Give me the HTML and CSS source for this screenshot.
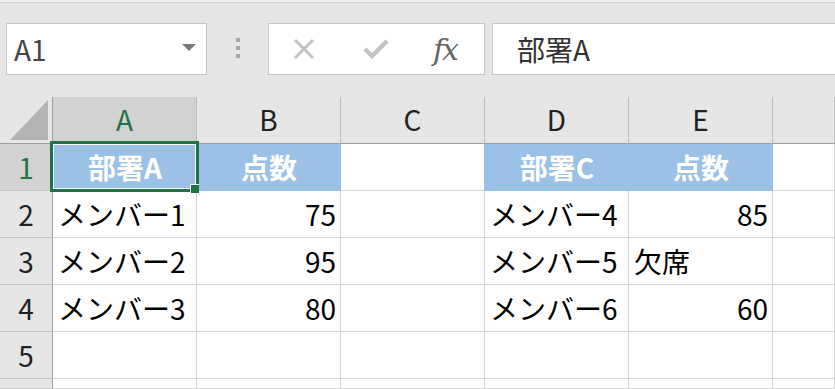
FILE: index.html
```html
<!DOCTYPE html>
<html lang="ja">
<head>
    <meta charset="UTF-8">
    <meta name="viewport" content="width=device-width, initial-scale=1.0">
    <title>Book1 - Excel</title>
    <link rel="stylesheet" href="styles.css">
</head>
<body>
    <div class="topline"></div>

    <div class="formula-bar">
        <div class="name-box">
            <span class="name-text">A1</span>
            <span class="dropdown"></span>
        </div>
        <div class="grip">
            <span></span><span></span><span></span>
        </div>
        <div class="fx-buttons">
            <svg class="icon cancel" width="24" height="24" viewBox="0 0 24 24">
                <path d="M3 3 L21 21 M21 3 L3 21" stroke="#c3c3c3" stroke-width="3" fill="none"/>
            </svg>
            <svg class="icon enter" width="26" height="24" viewBox="0 0 26 24">
                <path d="M2 12 L9 19 L24 4" stroke="#c3c3c3" stroke-width="4.5" fill="none"/>
            </svg>
            <span class="fx">fx</span>
        </div>
        <div class="formula-input">部署A</div>
    </div>

    <div class="sheet">
        <div class="corner"><span class="tri"></span></div>
        <div class="colhead selected">A</div>
        <div class="colhead">B</div>
        <div class="colhead">C</div>
        <div class="colhead">D</div>
        <div class="colhead">E</div>
        <div class="colhead"></div>

        <div class="rowhead selected">1</div>
        <div class="cell fill">部署A</div>
        <div class="cell fill">点数</div>
        <div class="cell edge"></div>
        <div class="cell fill">部署C</div>
        <div class="cell fill">点数</div>
        <div class="cell"></div>

        <div class="rowhead">2</div>
        <div class="cell">メンバー1</div>
        <div class="cell num">75</div>
        <div class="cell"></div>
        <div class="cell">メンバー4</div>
        <div class="cell num">85</div>
        <div class="cell"></div>

        <div class="rowhead">3</div>
        <div class="cell">メンバー2</div>
        <div class="cell num">95</div>
        <div class="cell"></div>
        <div class="cell">メンバー5</div>
        <div class="cell">欠席</div>
        <div class="cell"></div>

        <div class="rowhead">4</div>
        <div class="cell">メンバー3</div>
        <div class="cell num">80</div>
        <div class="cell"></div>
        <div class="cell">メンバー6</div>
        <div class="cell num">60</div>
        <div class="cell"></div>

        <div class="rowhead">5</div>
        <div class="cell"></div>
        <div class="cell"></div>
        <div class="cell"></div>
        <div class="cell"></div>
        <div class="cell"></div>
        <div class="cell"></div>

        <div class="rowhead"></div>
        <div class="cell"></div>
        <div class="cell"></div>
        <div class="cell"></div>
        <div class="cell"></div>
        <div class="cell"></div>
        <div class="cell"></div>

        <div class="selection"></div>
        <div class="handle"></div>
    </div>
</body>
</html>
```

FILE: styles.css
```css
body {
    margin: 0;
    height: 389px;
    overflow: hidden;
    background-color: #e6e6e6;
    font-family: 'Noto Sans CJK JP', 'Noto Sans', sans-serif;
    color: #000;
}
.topline {
    height: 2px;
    background-color: #f0f0f0;
    border-bottom: 1px solid #cdcdcd;
}
.formula-bar {
    display: flex;
    align-items: center;
    height: 94px;
    padding-left: 6px;
    box-sizing: border-box;
    padding-bottom: 3px;
}
.name-box {
    width: 201px;
    height: 52px;
    box-sizing: border-box;
    border: 1px solid #c6c6c6;
    background-color: #fff;
    display: flex;
    align-items: center;
    justify-content: space-between;
    padding: 0 10px 0 7px;
}
.name-text {
    font-size: 28px;
    color: #444;
}
.dropdown {
    width: 0;
    height: 0;
    border-left: 7px solid transparent;
    border-right: 7px solid transparent;
    border-top: 7px solid #7a7a7a;
    margin-bottom: 3px;
}
.grip {
    width: 61px;
    display: flex;
    flex-direction: column;
    align-items: center;
    gap: 4px;
    margin-bottom: 2px;
}
.grip span {
    width: 4px;
    height: 4px;
    background-color: #a8a8a8;
}
.fx-buttons {
    width: 217px;
    height: 52px;
    box-sizing: border-box;
    border: 1px solid #c6c6c6;
    background-color: #fff;
    display: flex;
    align-items: center;
    padding-left: 23px;
}
.icon {
    flex: none;
}
.enter {
    margin-left: 47px;
}
.fx {
    margin-left: 44px;
    margin-top: 2px;
    font-family: 'DejaVu Serif', 'Liberation Serif', serif;
    font-style: italic;
    font-size: 30px;
    letter-spacing: -2px;
    color: #666;
}
.formula-input {
    flex: 1;
    height: 52px;
    margin-left: 7px;
    box-sizing: border-box;
    border: 1px solid #c6c6c6;
    border-right: none;
    background-color: #fff;
    display: flex;
    align-items: center;
    padding-left: 24px;
    font-size: 28px;
    color: #333;
}
.sheet {
    position: relative;
    display: grid;
    grid-template-columns: 53px repeat(5, 144px) 1fr;
    grid-template-rows: repeat(6, 47px) 10px;
    background-color: #fff;
    font-size: 28px;
}
.corner {
    background-color: #e6e6e6;
    border-right: 1px solid #a0a0a0;
    border-bottom: 1px solid #9e9e9e;
    box-sizing: border-box;
    position: relative;
}
.tri {
    position: absolute;
    left: 10px;
    top: 3px;
    width: 0;
    height: 0;
    border-left: 38px solid transparent;
    border-bottom: 40px solid #b4b4b4;
}
.colhead {
    background-color: #e6e6e6;
    border-right: 1px solid #bdbdbd;
    border-bottom: 1px solid #9e9e9e;
    box-sizing: border-box;
    display: flex;
    align-items: center;
    justify-content: center;
    color: #222;
    padding-bottom: 3px;
}
.colhead.selected {
    background-color: #d2d2d2;
    color: #217346;
}
.rowhead {
    background-color: #e6e6e6;
    border-right: 1px solid #a0a0a0;
    border-bottom: 1px solid #c6c6c6;
    box-sizing: border-box;
    display: flex;
    align-items: center;
    justify-content: center;
    color: #222;
    overflow: hidden;
}
.rowhead.selected {
    background-color: #d2d2d2;
    color: #217346;
}
.cell {
    border-right: 1px solid #d4d4d4;
    border-bottom: 1px solid #d4d4d4;
    box-sizing: border-box;
    display: flex;
    align-items: center;
    padding: 0 4px 0 5px;
    white-space: nowrap;
    overflow: hidden;
}
.cell.num {
    justify-content: flex-end;
}
.cell.fill {
    background-color: #9bc2e6;
    border-color: #9bc2e6;
    color: #fff;
    font-weight: bold;
    justify-content: center;
}
.cell.edge {
    border-right-color: #9bc2e6;
}
.selection {
    position: absolute;
    left: 50px;
    top: 44px;
    width: 149px;
    height: 51px;
    box-sizing: border-box;
    border: 3px solid #217346;
    box-shadow: inset 0 0 0 1px #fff;
}
.handle {
    position: absolute;
    left: 190px;
    top: 87px;
    width: 8px;
    height: 8px;
    background-color: #217346;
    border-left: 1px solid #fff;
    border-top: 1px solid #fff;
}
```
